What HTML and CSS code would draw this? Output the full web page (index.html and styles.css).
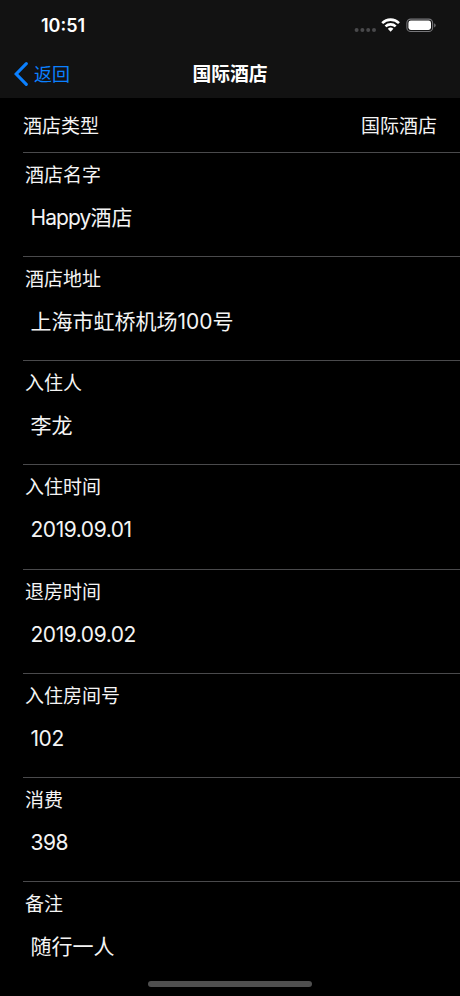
FILE: index.html
```html
<!DOCTYPE html>
<html lang="zh-CN">
<head>
<meta charset="utf-8">
<title>国际酒店</title>
<link rel="stylesheet" href="styles.css">
</head>
<body>
<header class="header">
  <div class="status">
    <span class="time">10:51</span>
    <svg class="status-icons" width="84" height="20" viewBox="0 0 84 20">
      <g fill="#49494b"><circle cx="2.6" cy="15" r="2"/><circle cx="8.4" cy="15" r="2"/><circle cx="14.2" cy="15" r="2"/><circle cx="20" cy="15" r="2"/></g>
      <g fill="none" stroke="#fff" stroke-width="2.6"><path d="M28.2 8.1a12 12 0 0 1 16.8 0"/><path d="M31.5 11.4a7.4 7.4 0 0 1 10.2 0"/></g>
      <path d="M33.8 13.8a4.1 4.1 0 0 1 5.6 0L36.6 16.8z" fill="#fff"/>
      <rect x="52.9" y="4.1" width="25.7" height="12.4" rx="3.8" fill="none" stroke="#77777a" stroke-width="1.1"/>
      <rect x="54.4" y="5.6" width="22.6" height="9.4" rx="2.4" fill="#fff"/>
      <path d="M80.2 8.2c2 .8 2 3.4 0 4.2z" fill="#77777a"/>
    </svg>
  </div>
  <nav class="nav">
    <a class="back"><svg width="14" height="24" viewBox="0 0 14 24"><path d="M12.3 1.7 2.2 12l10.1 10.3" fill="none" stroke="#0b80ff" stroke-width="3.1" stroke-linecap="round" stroke-linejoin="miter"/></svg><span class="back-text">返回</span></a>
    <h1 class="title">国际酒店</h1>
  </nav>
</header>
<main>
  <div class="type"><span>酒店类型</span><span>国际酒店</span></div>
  <section class="row"><div class="label">酒店名字</div><div class="value"><span class="latin">Happy</span>酒店</div></section>
  <section class="row"><div class="label">酒店地址</div><div class="value">上海市虹桥机场100号</div></section>
  <section class="row"><div class="label">入住人</div><div class="value">李龙</div></section>
  <section class="row"><div class="label">入住时间</div><div class="value date">2019.09.01</div></section>
  <section class="row"><div class="label">退房时间</div><div class="value date">2019.09.02</div></section>
  <section class="row"><div class="label">入住房间号</div><div class="value date">102</div></section>
  <section class="row"><div class="label">消费</div><div class="value date">398</div></section>
  <section class="row"><div class="label">备注</div><div class="value">随行一人</div></section>
</main>
<div class="home-indicator"></div>
</body>
</html>
```
FILE: styles.css
```css
* { box-sizing: border-box; }
html, body { height: 100%; overflow: hidden; }
body {
  margin: 0;
  background: #000;
  color: #f4f4f4;
  font-family: Inter, "Noto Sans CJK SC", sans-serif;
  font-size: 19px;
  font-weight: 400;
}
.header { height: 98px; background: #121212; }
.status {
  height: 50px;
  display: flex;
  justify-content: space-between;
  padding: 15px 22px 0 41px;
}
.time { font-size: 18px; line-height: 22px; font-weight: 600; color: #fff; }
.nav {
  height: 48px;
  display: grid;
  grid-template-columns: 1fr auto 1fr;
  align-items: center;
}
.back {
  display: flex;
  align-items: center;
  gap: 6px;
  padding-left: 14px;
  font-size: 18px;
  line-height: 24px;
  color: #0b80ff;
}
.back-text { padding-top: 2px; }
.title { margin: 0; padding-top: 2px; font-size: 18.8px; line-height: 24px; font-weight: 600; color: #fff; }
.type {
  height: 53.8px;
  display: flex;
  align-items: center;
  justify-content: space-between;
  padding: 0 23px 1px;
}
.row {
  height: 104.2px;
  margin-left: 23px;
  border-top: 1px solid #4a4a4c;
  padding: 9px 0 0 2px;
}
.label { line-height: 28px; }
.value { margin-top: 12px; padding-left: 5.5px; font-size: 21px; line-height: 32px; }
.latin { letter-spacing: -0.9px; }
.date { letter-spacing: -0.45px; }
.home-indicator {
  position: absolute;
  left: 148px;
  bottom: 9px;
  width: 164px;
  height: 6px;
  border-radius: 3px;
  background: #4f4f4f;
}
```
